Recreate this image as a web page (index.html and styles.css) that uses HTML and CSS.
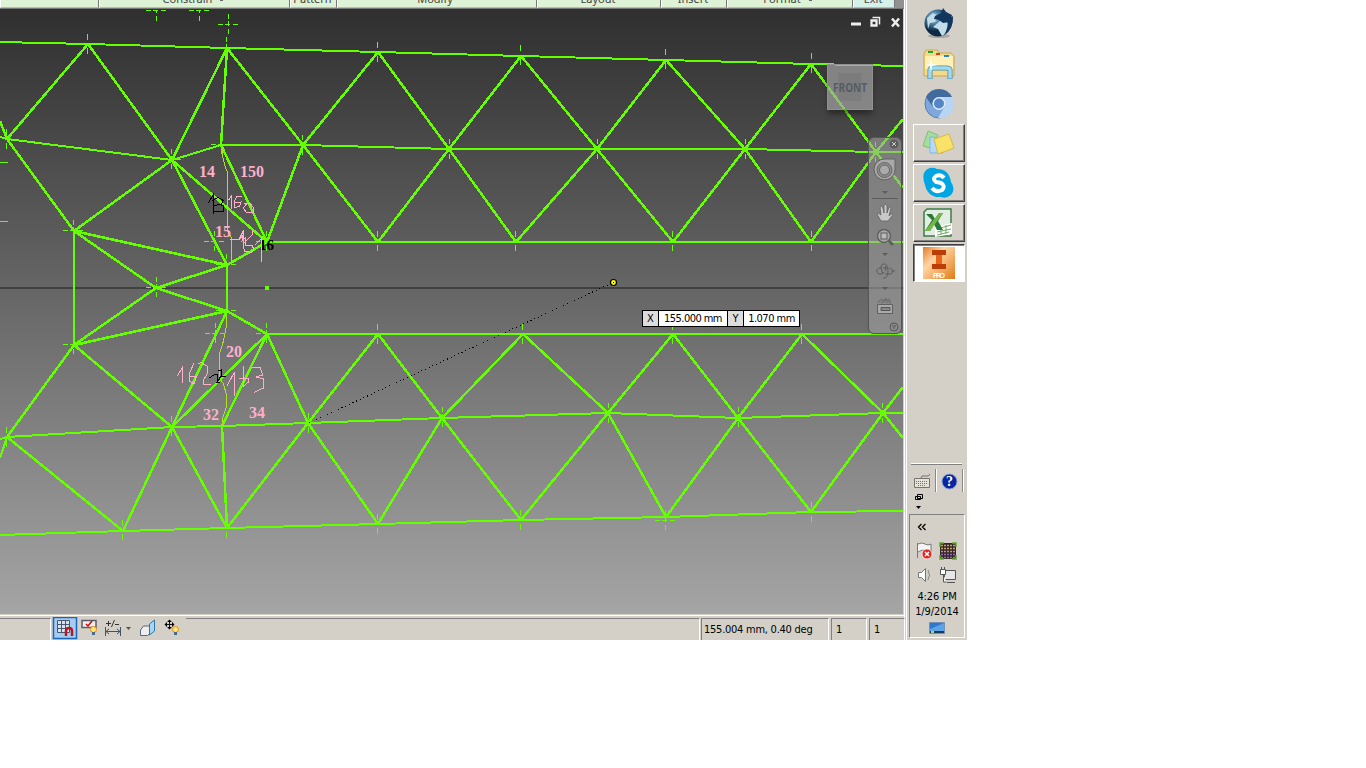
FILE: index.html
```
<!DOCTYPE html>
<html lang="en">
<head>
<meta charset="utf-8">
<title>Sketch editor</title>
<link rel="stylesheet" href="styles.css">
</head>
<body>
<div class="desktop">
  <main class="app">
    <div class="ribbon">
      <div class="panel p1"></div>
      <div class="panel p2"><span>Constrain</span><i class="dot"></i></div>
      <div class="panel p3"><span>Pattern</span></div>
      <div class="panel p4"><span>Modify</span></div>
      <div class="panel p5"><span>Layout</span></div>
      <div class="panel p6"><span>Insert</span></div>
      <div class="panel p7"><span>Format</span><i class="dot"></i></div>
      <div class="panel p8"><span>Exit</span></div>
    </div>
    <div class="viewport">
      <svg class="sketch" width="903" height="605" viewBox="0 9 903 605">
        <defs>
          <g id="c"><path d="M-10 .5h5M-3 .5h5M5 .5h5M.5-10v5M.5-3v5M.5 5v5"/></g>
          <g id="v"><path d="M.5-10v6M.5 4v6"/></g>
        </defs>
        <path class="axis" d="M0 288H903"/>
        <g class="edges">
          <path d="M0 42L88 44L227 48L378 52L521 56L666 60L811 64L903 66"/>
          <path d="M0 137L7 139L172 160L221 145H303L449 149H745L876 152H903M267 242H903M267 334H903M74 231V345M227 311V265"/>
          <path d="M0 439L7 437L172 427L222 426L308 423L442 418L608 413L738 418L883 413H903"/>
          <path d="M0 535L123 531L227 528L378 524L521 520L666 517L811 512L903 511"/>
        </g>
        <g class="edges diagonal">
          <path d="M0 121L7 139L88 44L172 160L227 48L303 145L378 52L449 149L521 56L597 149L666 60L745 149L811 64L876 152L903 119"/>
          <path d="M227 48L221 145L267 242L303 145L378 242L449 149L516 242L597 149L673 242L745 149L811 242L876 152L903 188"/>
          <path d="M7 139L74 231L172 160L267 242M172 160L227 265L74 231M74 345L227 311L267 334M74 231L156 288L227 265L267 242M74 345L156 288L227 311"/>
          <path d="M7 437L74 345L172 427L227 311M172 427L267 334L222 426L227 528L172 427L123 531L7 437L0 458"/>
          <path d="M267 334L308 423L378 334L442 418L523 334L608 413L673 334L738 418L802 334L883 413L903 387"/>
          <path d="M227 528L308 423L378 524L442 418L521 520L608 413L666 517L738 418L811 512L883 413L903 438"/>
        </g>
        <g class="marks">
          <path d="M146 10.500h5M153 10.500h5M161 10.500h5M156.500 11v2M156.500 16v5M189 10.500h5M196 10.500h5M204 10.500h5M199.500 11v2M199.500 16v5M226.500 37v5M226.500 44v4"/>
          <use href="#c" x="228" y="24"/><use href="#v" x="87" y="44"/><use href="#v" x="377" y="52"/>
          <use href="#v" x="520" y="55"/><use href="#v" x="665" y="59"/><use href="#v" x="811" y="63"/>
          <use href="#v" x="6" y="139"/><use href="#c" x="171" y="159"/><use href="#c" x="221" y="144"/>
          <use href="#c" x="302" y="145"/><use href="#c" x="449" y="149"/><use href="#c" x="597" y="149"/><use href="#c" x="745" y="149"/><use href="#c" x="875" y="152"/>
          <use href="#c" x="214" y="241"/><use href="#c" x="266" y="241"/><use href="#v" x="377" y="241"/><use href="#v" x="515" y="241"/><use href="#v" x="672" y="241"/><use href="#v" x="811" y="241"/>
          <use href="#c" x="73" y="230"/><use href="#c" x="156" y="287"/><use href="#c" x="226" y="264"/><use href="#c" x="226" y="310"/>
          <use href="#c" x="73" y="344"/><use href="#c" x="215" y="333"/><use href="#c" x="266" y="333"/>
          <use href="#v" x="377" y="334"/><use href="#v" x="522" y="334"/><use href="#v" x="672" y="334"/><use href="#v" x="801" y="334"/>
          <use href="#v" x="6" y="437"/><use href="#v" x="171" y="426"/><use href="#v" x="308" y="423"/><use href="#c" x="442" y="417"/><use href="#c" x="608" y="413"/><use href="#c" x="738" y="417"/><use href="#c" x="882" y="413"/>
          <use href="#v" x="122" y="530"/><use href="#v" x="226" y="528"/><use href="#v" x="377" y="524"/><use href="#v" x="520" y="520"/><use href="#c" x="665" y="520"/><use href="#v" x="811" y="512"/>
          <path d="M0 162.500h8M0 221.500h8"/>
        </g>
        <rect class="node" x="265" y="286" width="4" height="4"/>
        <path class="old" d="M222.500 147V156L225.500 168L227.500 172V231L231.500 238V262M226.500 315V326L222.500 345L219.500 353V378L223.500 384L226.500 395V407L222.500 418V426"/>
        <path class="rubber" d="M309 423L612 283"/>
        <circle class="handle" cx="613.500" cy="282.500" r="3"/><path class="ink" d="M613 282.500h1"/>
        <g class="labels">
          <text x="199" y="177" textLength="16">14</text><text x="240" y="177" textLength="24">150</text>
          <text x="215" y="237" textLength="16">15</text><text x="226" y="357" textLength="16">20</text>
          <text x="203" y="420" textLength="16">32</text><text x="249" y="418" textLength="16">34</text>
          <text class="dark" x="259" y="250" textLength="15">16</text>
        </g>
        <path class="ink" d="M208.500 203L213.500 194V214M212 200.500L218 197.500L223.500 200.500L221 204.500L213 205.500M220 204.500L223.500 206V211.500H214M209.500 378L214.500 374.500H217V382.500L221 376.500L226 377M218 370.500L221.500 370V375L217 382.500H220"/>
        <path class="pink" d="M228.500 200.500L231.500 195V208.500M241.500 196.500H237L234.500 201V207.500L239.500 206.500L241 202L235 203M244.500 203.500L250 203L253.500 208V212H246L243.500 208L247 203"/>
        <path class="pink" d="M230 239.500H239L243.500 230.500V245.500M240 239L244 234L242 241L245 238V246M252.500 230L252 235L243 244M243 244L244.500 251L251 252.500L254 250L252 245H246M255 245L261.500 238.500V262"/>
        <path class="pink" d="M177.500 376L182.500 367V382.500M194 363L189.500 373V381L194 384L196.500 376H190M198 364L201 362.500L207 366V374L203 381V385L211 384.500M227 386L234.500 372V396M243.500 366V386L248.500 382V378H239M252 367.500L260 367L262.500 375L256 377L263.500 379V388L254 392.500"/>
      </svg>
      <div class="winbtns">
        <svg width="54" height="16" viewBox="0 0 54 16"><path d="M4 10h10" stroke="#eee" stroke-width="3"/><path d="M25.500 3.500h7v7" fill="none" stroke="#eee" stroke-width="1.500"/><path d="M24.500 6.500h5v5h-5z" fill="none" stroke="#eee" stroke-width="2.300"/><path d="M45 4.500l7 8M52 4.500l-7 8" stroke="#eee" stroke-width="2.500"/></svg>
      </div>
      <div class="cube"><div>FRONT</div></div>
      <div class="coords"><b>X</b><span class="vx">155.000 mm</span><b>Y</b><span class="vy">1.070 mm</span></div>
      <div class="navbar">
        <svg width="34" height="196" viewBox="0 0 34 196"><circle cx="25" cy="6" r="4.500" fill="#5c5c5c"/><path d="M23 4l4 4m0-4l-4 4" stroke="#ccc"/>
          <path d="M16 21H26V32A10.500 10.500 0 1 1 16 21Z" fill="#a9a9a9" stroke="#626262"/><circle cx="15.500" cy="32" r="7.500" fill="#8c8c8c" stroke="#666"/><circle cx="15.500" cy="32" r="5" fill="#aaa" stroke="#666"/>
          <path d="M13 53h6l-3 3zM13 115h6l-3 3zM13 149h6l-3 3z" fill="#5c5c5c"/><path d="M3 60.500h26" stroke="#5c5c5c"/>
          <path d="M12 83L8 76Q9 74 12 77L11 69Q13 67 14 70L15 75V67Q17 65 18 68V75L20 69Q22 68 22 70L20 78L22 76Q25 75 23 78L19 83Z" fill="#c8c8c8" stroke="#606060" stroke-width=".8"/>
          <path d="M19 102l5 5" stroke="#606060" stroke-width="3"/><circle cx="15" cy="98" r="6.500" fill="#a8a8a8" stroke="#626262" stroke-width="1.500"/><rect x="12" y="95" width="6" height="6" fill="#bbb" stroke="#5c5c5c"/>
          <g fill="none" stroke="#5f5f5f"><path d="M14 136Q10 127 14 126Q19 125 19 133Q19 141 14 140"/><path d="M13 130H10q-5 3 0 6h3l2-2M20 130q7 2 2 6h-6M14 130h5M16.500 128v5M22 133h4"/></g>
          <path d="M8.500 166.500h15v9h-15z" fill="#aaa" stroke="#5f5f5f"/><path d="M12 169.500h9v3h-9z" fill="#888" stroke="#555"/><path d="M9 165l2-3h6v-2M12 165l8-4M17 165l4-3v4" fill="none" stroke="#666"/>
          <circle cx="25" cy="189" r="4" fill="none" stroke="#555"/><path d="M23 188h4M24 190h2" stroke="#555"/></svg>
      </div>
    </div>
    <footer class="status">
      <div class="pane blank"></div>
      <div class="tools">
        <svg width="135" height="23" viewBox="51 617 135 23">
          <rect x="53.500" y="617.500" width="23" height="21" fill="#a8cbf0" stroke="#1667bd" stroke-width="1.500"/>
          <path d="M57.500 620.500h12v12h-12zM61.500 620v13M65.500 620v13M57 624.500h13M57 628.500h13" fill="#d9e3ee" stroke="#46566c"/><path d="M66 636v-5q0-3 3-3t3 3v5" fill="none" stroke="#b41821" stroke-width="2.500"/>
          <path d="M82 620.500h14v7H82z" fill="#eee" stroke="#5b5c68" stroke-width="1.500"/><path d="M86 624l2 2 4-5" fill="none" stroke="#d00" stroke-width="1.500"/>
          <g id="bulb"><circle cx="93.500" cy="629.500" r="3" fill="#ffe77b" stroke="#e98b12"/><path d="M92 632h3v3h-3z" fill="#496a8b"/></g>
          <path d="M106 623.500h5M108.500 621v5M115 624.500h4M114.500 620l-3 7" stroke="#333" fill="none"/><path d="M105.500 627v9M120.500 627v9M106 631.500h14M109 629l-3 2.500 3 2.500M117 629l3 2.500-3 2.500" fill="none" stroke="#40546b"/><path d="M126 627h5l-2.500 3z" fill="#555"/>
          <path d="M140.500 630l3-4h7v7l-3 2.500h-7z" fill="#eee" stroke="#59677b"/><path d="M149.500 624l5-4v11l-5 4z" fill="#a9d5f4" stroke="#2d78ac"/>
          <path d="M166 624.500h7M169.500 621v7" stroke="#111"/><path d="M169.500 619.500l2.500 2.500h-5zM169.500 629.500l2.500-2.500h-5zM164.500 624.500l2.500-2.500v5zM174.500 624.500l-2.500-2.500v5z"/><use href="#bulb" x="82"/>
        </svg></div>
      <div class="pane grow"></div>
      <div class="pane s1"><span>155.004 mm, 0.40 deg</span></div>
      <div class="pane s2">1</div>
      <div class="pane s3">1</div>
    </footer>
  </main>
  <aside class="taskbar">
    <div class="launch">
      <svg width="34" height="34" viewBox="0 0 34 34"><defs><radialGradient id="globe" cx=".35" cy=".3"><stop stop-color="#b9e0ed"/><stop offset=".5" stop-color="#477c9c"/><stop offset="1" stop-color="#0b2845"/></radialGradient></defs><ellipse cx="17" cy="30" rx="11" ry="2" fill="#aaa69f"/><circle cx="16" cy="17" r="13.500" fill="url(#globe)"/><path d="M5 12l6-5 5 3-3 6-5 1-2 6zM18 15l7-1 4 4-3 8-6 4-4-7-5-2z" fill="#c2dce8"/><path d="M13 10l6-3 2-5 3 4 6 3-2 7-7 1-4-3-5-1zM25 14l6-4q1 13-9 19 5-8 3-15z" fill="#12375f"/></svg>
      <svg width="34" height="34" viewBox="0 0 34 34"><path d="M2 7l2-4h11l2 3h12l3 3v20H2z" fill="#f4da86" stroke="#c9a84e"/><path d="M3 9h28v13H3z" fill="#fff0b5"/><path d="M6 4h5v2H6z" fill="#19a437"/><path d="M14 6h4v2h-4z" fill="#d73b24"/><path d="M22 8h5v2h-5z" fill="#2785cf"/><path d="M8 32V23q0-2 3-2h13q4 0 4 2v9" fill="none" stroke="#478dac" stroke-width="5"/><path d="M8 31.500V23q0-2 3-2h13q4 0 4 2v8.500" fill="none" stroke="#9fdaf0" stroke-width="3.500"/><path d="M9 11l1 6 6 1-6 1-1 6-1-6-5-1 5-1z" fill="#fff"/></svg>
      <svg width="34" height="34" viewBox="0 0 34 34"><circle cx="17" cy="16" r="14" fill="#80a7dc" stroke="#587eac"/><path d="M4 9A14.500 14.500 0 0 1 30 9H17a7 7 0 0 0-6 10z" fill="#416a9e"/><path d="M30 9H17l6 9-7 12A14 14 0 0 0 30 9z" fill="#b9d5f4"/><circle cx="17" cy="15.500" r="6.500" fill="#dce9f8"/><circle cx="17" cy="15.500" r="5" fill="#5385c7"/></svg>
    </div>
    <div class="tasks">
      <div class="task"><svg width="36" height="32" viewBox="0 0 36 32"><path d="M7 4l10 4-4 14L2 19z" fill="#a3df98" stroke="#87bb85"/><path d="M9 10l14 1-1 15H9z" fill="#b2d9fa" stroke="#83b5df"/><path d="M13 12l15-5 5 14-16 6z" fill="#fae168" stroke="#d9b940"/></svg></div>
      <div class="task"><svg width="36" height="32" viewBox="0 0 36 32"><path d="M9 1q4-1 7 1 12 0 14 13 5 7 0 13-5 4-10 2Q7 31 4 18-1 4 9 1z" fill="#00a5e3"/><path d="M23 11q-3-4-8-2-4 3 0 6l5 1q5 3 1 7-6 3-10-2" fill="none" stroke="#fff" stroke-width="4"/></svg></div>
      <div class="task"><svg width="36" height="32" viewBox="0 0 36 32"><path d="M3 5l3-3h24v27H3z" fill="#e2eee3" stroke="#3c7b48" stroke-width="1.500"/><path d="M14 20l17-4v11l-17 3z" fill="#fff"/><path d="M16 22l14-4M16 25l14-3M16 28l12-3M20 20v8M25 18v9" stroke="#70ad65"/><path d="M5 7h6l3 5 4-6h4l-5 8 5 9h-6l-3-6-4 7H4l7-11z" fill="#277b37"/><path d="M18 6h4L9 24H4z" fill="#75b849"/></svg></div>
      <div class="task active"><svg width="32" height="32" viewBox="0 0 32 32"><defs><linearGradient id="inv" x2="1" y2="1"><stop stop-color="#e37a26"/><stop offset=".35" stop-color="#ffd5a4"/><stop offset="1" stop-color="#e27b17"/></linearGradient></defs><path d="M0 0h32v32H0z" fill="url(#inv)"/><path d="M9 3h14v5h-4v9h4v5H9v-5h4V8H9z" fill="#b93e08"/><path d="M13 8h6v9h-6z" fill="#e76519"/><text x="16" y="31" text-anchor="middle" textLength="12" class="pro">PRO</text></svg></div>
    </div>
    <div class="lang"><div class="rule"></div><svg width="56" height="50" viewBox="910 466 56 50">
      <path d="M914.500 478.500h15v9h-15z" fill="#e5e2dc" stroke="#77736d"/><path d="M916 481.500h12M916 483.500h12M918 485.500h8" stroke="#77736d" stroke-dasharray="1 1"/><path d="M921 478q0-3 4-2t5-2" fill="none" stroke="#77736d"/><path d="M935.500 469v23M962.500 469v23" stroke="#888"/><path d="M936.500 469v23M963.500 469v23" stroke="#fff"/><circle cx="949.500" cy="481.500" r="7.500" fill="#0b249f" stroke="#85a0d2"/><text class="q" x="949.500" y="486" text-anchor="middle">?</text><path d="M917.500 494.500h5v4h-5zM915.500 496.500h5v3h-5z" fill="#d4d0c8" stroke="#000"/><path d="M916 506h5l-2.500 3z"/></svg></div>
    <div class="tray">
      <svg width="54" height="73" viewBox="910 515 54 73">
        <path d="M921.500 524l-3 3 3 3M925.500 524l-3 3 3 3" fill="none" stroke="#000" stroke-width="1.300"/>
        <path d="M917.500 543v15M918 544q4-2 7 0t6 0v8q-4 1-6-1t-7 1" fill="#f5f5f5" stroke="#777"/><circle cx="927" cy="554" r="5" fill="#dd2922" stroke="#fff" stroke-width=".7"/><path d="M925 552l4 4m0-4l-4 4" stroke="#fff" stroke-width="1.500"/>
        <rect x="940" y="543" width="16" height="16" fill="#302925"/><path d="M941 545.500h14M941 548.500h14" stroke="#c9a06e" stroke-width="1.500" stroke-dasharray="2 1"/><path d="M941 551.500h14" stroke="#ce8499" stroke-width="1.500" stroke-dasharray="2 1"/><path d="M941 554.500h14M941 557.500h14" stroke="#9966af" stroke-width="1.500" stroke-dasharray="2 1"/><path d="M940 547v-4h4M952 543h4v4M956 555v4h-4M944 559h-4v-4" stroke="#67a72d" fill="none" stroke-width="1.500"/>
        <path d="M918.500 572.500h3l4-4v13l-4-4h-3z" fill="#fff" stroke="#777"/><path d="M928 570q3 5 0 10" fill="none" stroke="#888"/><path d="M944.500 570.500h11v9h-11zM947 582.500h8" fill="#e6e6e6" stroke="#555"/><path d="M940.500 569.500h5v5h-5zM941.500 567v2M944.500 567v2M943.500 575v7h3" fill="#fff" stroke="#555"/>
      </svg>
      <div class="clock"><span>4:26 PM</span><span>1/9/2014</span></div>
      <svg width="16" height="12" viewBox="0 0 16 12"><path d="M.5.500h15v11H.5z" fill="#2e77ca" stroke="#7591b5"/><path d="M1 7L15 1v8H1z" fill="#5ca3e8"/><path d="M1 9h14v2H1z" fill="#153c68"/><path d="M2 9h3v2H2z" fill="#9be064"/></svg>
    </div>
  </aside>
</div>
</body>
</html>
```
FILE: styles.css
```
body { margin: 0; background: #fff; font: 11px/13px "DejaVu Sans Condensed", "DejaVu Sans", sans-serif; color: #000; overflow: hidden; }
svg { display: block; flex: none; }
.desktop { display: flex; width: 967px; height: 640px; background: #d4d0c8; }
.app { width: 904px; height: 640px; flex: none; display: flex; flex-direction: column; border-right: 1px solid #fff; }
.ribbon { height: 9px; display: flex; box-sizing: border-box; border-bottom: 1px solid #777; background: #919191; overflow: hidden; line-height: 12px; font-family: "Noto Sans", sans-serif; }
.panel { height: 8px; box-sizing: border-box; border-right: 1px solid #777; border-left: 1px solid #fff; border-bottom: 1px solid #b5bfae; background: #def2d5; display: flex; justify-content: center; align-items: flex-end; color: #444; flex: none; }
.panel span { margin-bottom: 2px; }
.dot { width: 3px; height: 1px; background: #666; margin: 0 0 6px 8px; }
.p1 { width: 99px; }
.p2 { width: 191px; padding-right: 3px; }
.p3 { width: 47px; padding-right: 2px; }
.p4 { width: 200px; padding-right: 4px; }
.p5 { width: 124px; padding-right: 2px; }
.p6 { width: 66px; padding-right: 2px; }
.p7 { width: 126px; padding-right: 5px; }
.p8 { width: 42px; padding-right: 2px; background: #d5f2ea; }
.viewport { position: relative; width: 903px; height: 605px; background: linear-gradient(#2f2f2f, #a5a5a5); border-right: 1px solid #d4d0c8; overflow: hidden; }
.sketch path, .sketch rect { shape-rendering: crispEdges; }
.axis { stroke: #404040; stroke-width: 2; }
.edges { fill: none; stroke: #66ff00; stroke-width: 2; stroke-linejoin: bevel; }
.diagonal { stroke-width: 2.5; }
.marks { fill: none; stroke: #66ff00; stroke-width: 1; }
.node { fill: #66ff00; }
.old { fill: none; stroke: #b2df20; }
.rubber { stroke: #000; stroke-dasharray: 1 3; }
.handle { fill: #ffff00; stroke: #000; stroke-width: 1.2; }
.labels { font: bold 16px "Liberation Serif", serif; fill: #ffb0c8; }
.labels .dark { fill: #000; font-size: 15px; }
.ink, .pink { fill: none; stroke: #000; }
.pink { stroke: #ffb0c8; }
.winbtns { position: absolute; left: 847px; top: 5px; }
.cube { position: absolute; left: 827px; top: 55px; width: 46px; height: 46px; box-sizing: border-box; padding: 8px 0; background: rgba(165,165,165,.68); border: 1px solid #919191; box-shadow: 0 5px 5px -1px rgba(20,20,20,.5); }
.cube div { margin: 0 8px; height: 28px; background: rgba(110,110,110,.3); display: flex; justify-content: center; align-items: center; font: bold 12px "Open Sans", sans-serif; transform: scaleX(.83); color: #555b64; }
.navbar { position: absolute; left: 868px; top: 128px; width: 34px; height: 197px; background: rgba(165,165,165,.55); border: 1px solid #565656; border-radius: 6px; box-shadow: 0 0 1px #555; box-sizing: border-box; }
.coords { position: absolute; left: 642px; top: 301px; width: 158px; height: 17px; box-sizing: border-box; display: flex; border: 1px solid #000; background: #000; gap: 1px; line-height: 16px; text-align: center; }
.coords b { font-weight: normal; background: #ddd; width: 15px; }
.coords span { background: #fff; letter-spacing: -.5px; }
.coords .vx { width: 68px; letter-spacing: -.55px; }
.coords .vy { width: 55px; }
.status { height: 26px; box-sizing: border-box; display: flex; border-top: 1px solid #d4d0c8; padding-top: 3px; background: linear-gradient(#fff 1px, #d4d0c8 1px); }
.pane { box-sizing: border-box; height: 22px; border-top: 1px solid #808080; border-right: 1px solid #fff; display: flex; align-items: center; flex: none; }
.blank { width: 51px; }
.tools { width: 135px; height: 22px; margin-top: -1px; }
.grow { width: 514px; }
.s1, .s2, .s3 { border-left: 1px solid #808080; margin-left: 1px; white-space: nowrap; }
.s1 { width: 128px; padding-left: 2px; letter-spacing: -.25px; }
.s2, .s3 { width: 36px; margin-left: 2px; padding-left: 4px; }
.taskbar { width: 60px; height: 640px; box-sizing: border-box; padding-left: 2px; margin-left: 1px; border-left: 1px solid #fff; display: flex; flex-direction: column; }
.launch { display: flex; flex-direction: column; gap: 7px; padding: 6px 0 3px 13px; height: 115px; }
.tasks { display: flex; flex-direction: column; gap: 2px; padding-left: 4px; height: 339px; }
.task { width: 52px; height: 38px; box-sizing: border-box; border: 1px solid; border-color: #fff #404040 #404040 #fff; box-shadow: inset -1px -1px #808080; display: flex; align-items: center; justify-content: center; }
.active { background: #fff; border-color: #404040 #fff #fff #404040; box-shadow: inset 1px 1px #808080; }
.pro { font: bold 7px "Liberation Sans", sans-serif; fill: #fff; }
.lang { height: 51px; margin-left: 1px; width: 54px; }
.rule { border-top: 1px solid #fff; border-bottom: 1px solid #808080; margin: 0 0 1px 1px; width: 51px; }
.q { font: bold 14px "Liberation Serif", serif; fill: #fff; }
.tray { width: 56px; height: 124px; box-sizing: border-box; border: 1px solid; border-color: #808080 #fff #fff #808080; display: flex; flex-direction: column; align-items: center; }
.clock { display: flex; flex-direction: column; align-items: center; line-height: 15px; height: 34px; padding-top: 1px; box-sizing: border-box; letter-spacing: -.1px; }
```
